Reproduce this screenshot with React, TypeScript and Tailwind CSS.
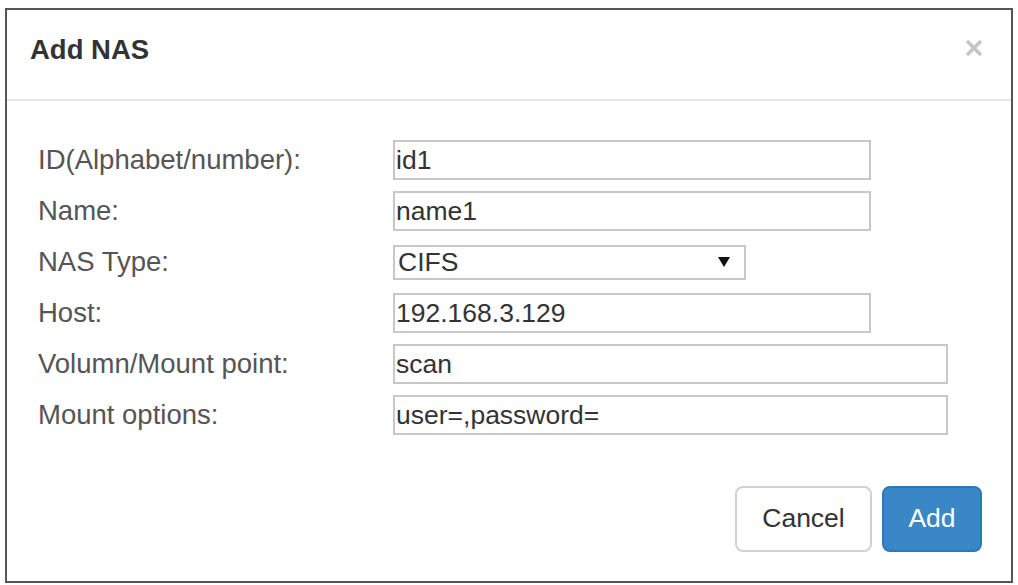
import React from "react";

const font = { fontFamily: '"Liberation Sans", Arial, sans-serif' };

const fields: { label: string; value: string; width: string; kind?: "select" }[] = [
  { label: "ID(Alphabet/number):", value: "id1", width: "w-[478px]" },
  { label: "Name:", value: "name1", width: "w-[478px]" },
  { label: "NAS Type:", value: "CIFS", width: "w-[353px]", kind: "select" },
  { label: "Host:", value: "192.168.3.129", width: "w-[478px]" },
  { label: "Volumn/Mount point:", value: "scan", width: "w-[555px]" },
  { label: "Mount options:", value: "user=,password=", width: "w-[555px]" },
];

function Field({ label, value, width, kind }: (typeof fields)[number]) {
  return (
    <div className="flex h-[40px] items-center">
      <label className="w-[355px] text-[27.5px] leading-[30px] text-[#555]">{label}</label>
      {kind === "select" ? (
        <div
          className={`${width} flex h-[35px] items-center justify-between border-2 border-[#c8c8c8] bg-white pl-[3px] pr-[14px] text-[26.5px] leading-[30px] text-[#333]`}
        >
          <span>{value}</span>
          <svg width="12" height="10" viewBox="0 0 12 10">
            <path d="M0 0h12L6 10z" fill="#111" />
          </svg>
        </div>
      ) : (
        <input
          readOnly
          value={value}
          style={font}
          className={`${width} h-[40px] border-2 border-[#c8c8c8] bg-white px-[1px] text-[26.5px] text-[#333] outline-none`}
        />
      )}
    </div>
  );
}

export default function App() {
  return (
    <div className="min-h-screen bg-white pl-[5px] pt-[8px]" style={font}>
      <div className="flex h-[575px] w-[1008px] flex-col border-2 border-[#555] bg-white">
        {/* header */}
        <div className="flex h-[91px] items-start justify-between border-b-2 border-[#e8e8e8] pl-[23px] pr-[28px] pt-[25px]">
          <h4 className="text-[27.5px] font-bold leading-[30px] text-[#333]">Add NAS</h4>
          <button type="button" className="mt-[4px]" aria-label="Close">
            <svg width="18" height="18" viewBox="0 0 18 18">
              <path d="M2 2l14 14M16 2L2 16" stroke="#c4c4c4" strokeWidth="3.4" />
            </svg>
          </button>
        </div>

        {/* form */}
        <div className="flex flex-col gap-[11px] pl-[31px] pt-[39px]">
          {fields.map((f) => (
            <Field key={f.label} {...f} />
          ))}
        </div>

        {/* footer */}
        <div className="mt-[51px] flex justify-end gap-[10px] pr-[29px]">
          <button
            type="button"
            className="h-[66px] w-[137px] rounded-[8px] border-2 border-[#d2d2d2] bg-white text-[26.5px] text-[#333]"
          >
            Cancel
          </button>
          <button
            type="button"
            className="h-[66px] w-[100px] rounded-[8px] border-2 border-[#2f78b7] bg-[#3a87c8] text-[26.5px] text-white"
          >
            Add
          </button>
        </div>
      </div>
    </div>
  );
}
